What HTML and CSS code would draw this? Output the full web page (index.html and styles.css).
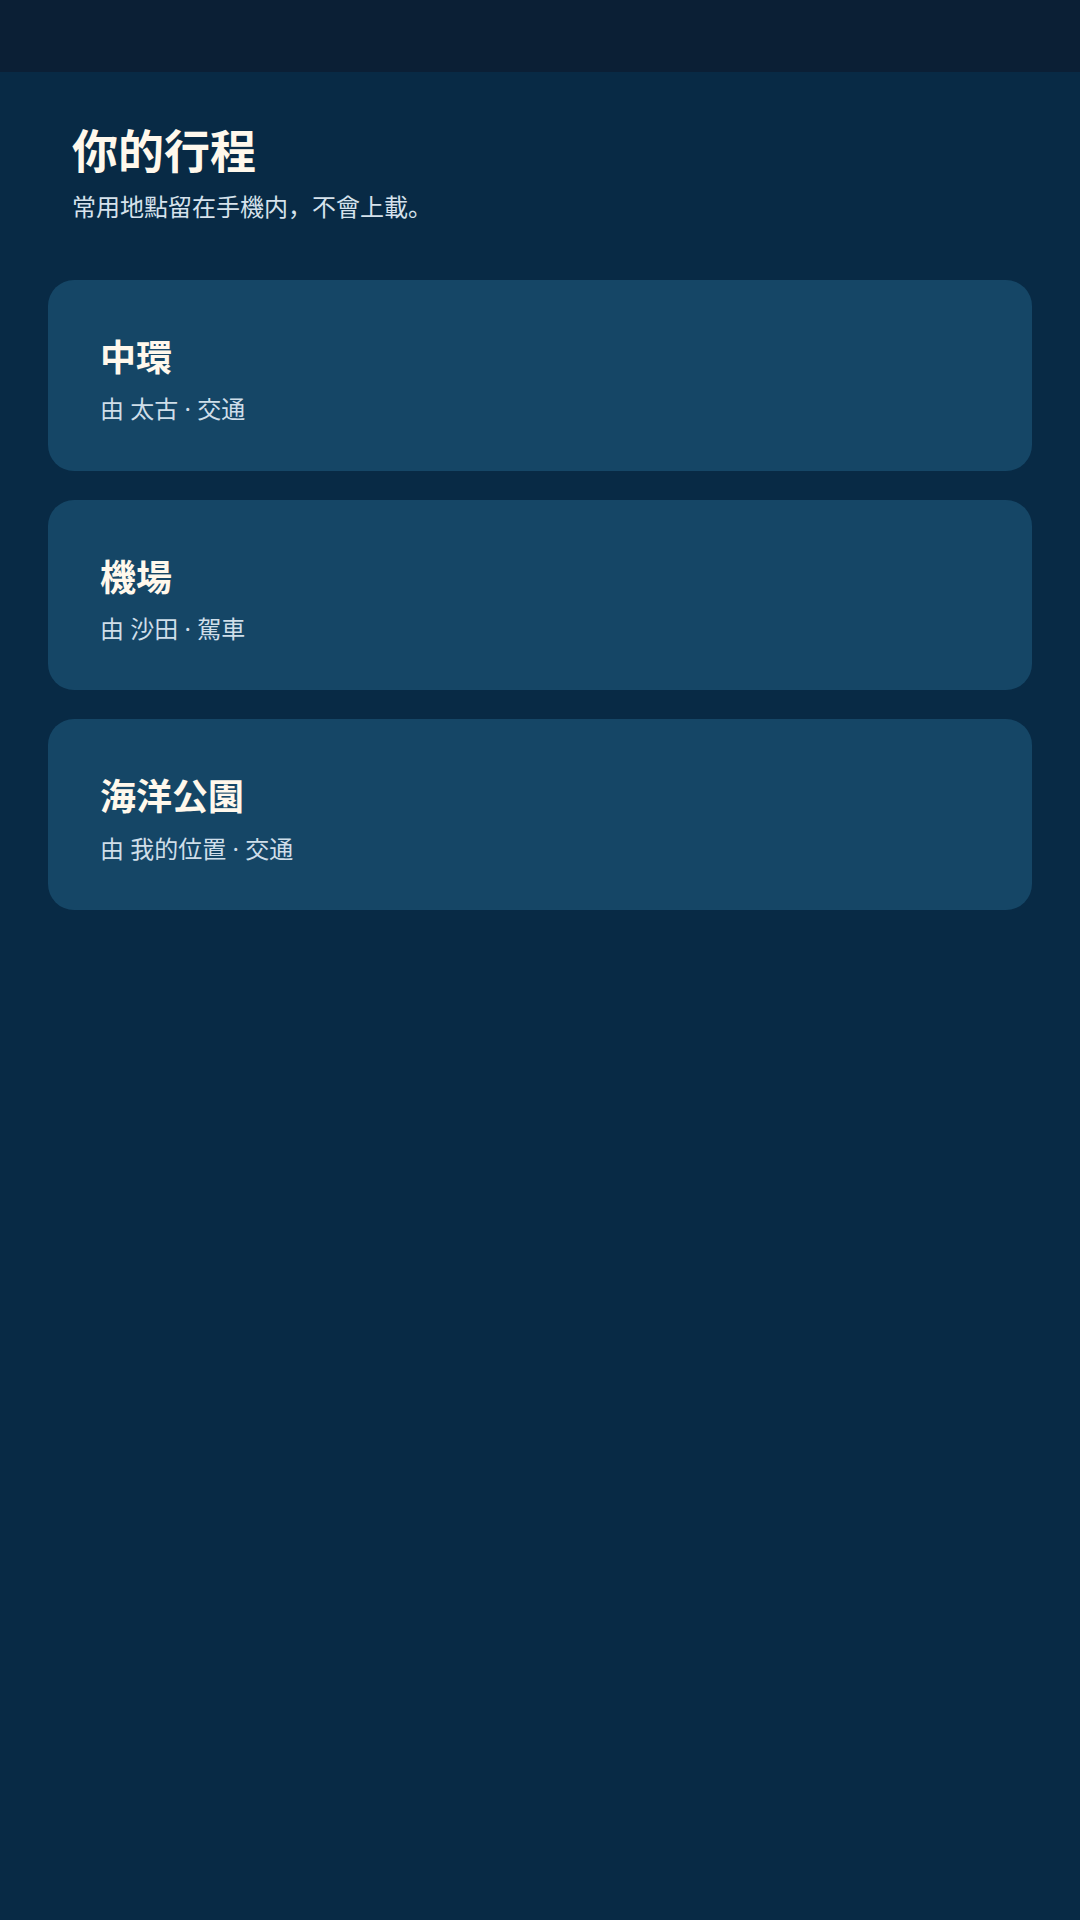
FILE: index.html
```html
<!DOCTYPE html>
<html lang="en">
<head>
  <meta charset="UTF-8">
  <meta name="viewport" content="width=device-width, initial-scale=1.0">
  <title>你的行程</title>
  <link rel="stylesheet" href="styles.css">
</head>
<body>
  <div class="topbar"></div>
  <main class="page">
    <header class="header">
      <h1 class="title">你的行程</h1>
      <p class="subtitle">常用地點留在手機内，不會上載。</p>
    </header>
    <section class="trips">
      <div class="trip-card">
        <div class="trip-name">中環</div>
        <div class="trip-meta">由 太古 · 交通</div>
      </div>
      <div class="trip-card">
        <div class="trip-name">機場</div>
        <div class="trip-meta">由 沙田 · 駕車</div>
      </div>
      <div class="trip-card">
        <div class="trip-name">海洋公園</div>
        <div class="trip-meta">由 我的位置 · 交通</div>
      </div>
    </section>
  </main>
</body>
</html>
```

FILE: styles.css
```css
html, body {
  margin: 0;
  padding: 0;
  width: 100%;
  height: 100%;
  background: #082a45;
  font-family: "Noto Sans", "Noto Sans CJK JP", sans-serif;
}

.topbar {
  height: 72px;
  background: #0b1f35;
}

.header {
  padding: 51px 72px 0;
}

.title {
  margin: 0;
  font-size: 46px;
  line-height: 1.2;
  font-weight: 700;
  color: #fff8ec;
}

.subtitle {
  margin: 12px 0 0;
  font-size: 24px;
  line-height: 1.4;
  color: #d6e2ec;
}

.trips {
  display: flex;
  flex-direction: column;
  gap: 29px;
  padding: 56px 48px 0;
}

.trip-card {
  background: #154666;
  border-radius: 26px;
  padding: 56px 52px 45px;
}

.trip-name {
  font-size: 36px;
  line-height: 1.2;
  font-weight: 700;
  color: #fff8ec;
}

.trip-meta {
  margin-top: 13px;
  font-size: 24px;
  line-height: 1.4;
  color: #cfdee9;
}
```
